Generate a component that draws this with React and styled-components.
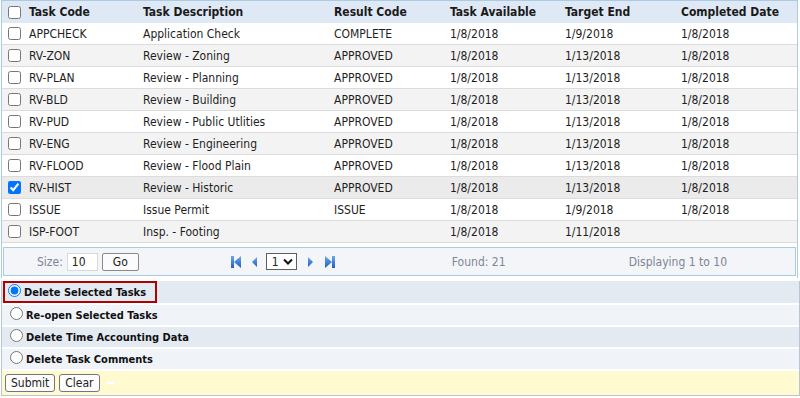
import React from "react"
import styled, { createGlobalStyle } from "styled-components"

const GlobalStyle = createGlobalStyle`
  body {
    margin: 0;
    background: #ffffff;
    font-family: "DejaVu Sans Condensed", "DejaVu Sans", Verdana, sans-serif;
    color: #1e1e1e;
  }
`

const Page = styled.div`
  width: 800px;
  height: 398px;
  overflow: hidden;
`

const Panel = styled.div`
  box-sizing: border-box;
  width: 797px;
  margin-left: 1px;
  border: 1px solid #a9cbe4;
  border-bottom: none;
  padding-bottom: 1px;
`

const COLS = "24px 114px 191px 116px 115px 116px 1fr"

const HeaderRow = styled.div`
  display: grid;
  grid-template-columns: ${COLS};
  height: 22px;
  align-items: center;
  background: #dfe8f5;
  font-size: 12px;
  font-weight: bold;
  color: #1a1a1a;
`

const Row = styled.div`
  display: grid;
  grid-template-columns: ${COLS};
  height: 21px;
  align-items: center;
  border-bottom: 1px solid #dcdcdc;
  background: ${({ $bg }) => $bg};
  font-size: 12px;
`

const Cell = styled.div`
  padding-left: 3px;
  white-space: nowrap;
`

const BoxCell = styled.div`
  display: flex;
  align-items: center;
  padding-left: 6px;
`

const Check = styled.input`
  width: 13px;
  height: 13px;
  margin: 0;
`

const Pager = styled.div`
  display: flex;
  align-items: center;
  height: 27px;
  margin: 4px 1px 1px 1px;
  border: 1px solid #a9cbe4;
  background: #f3f5f8;
  font-size: 12px;
  color: #7d8597;
`

const SizeLabel = styled.span`
  margin-left: 33px;
`

const SizeInput = styled.div`
  box-sizing: border-box;
  width: 31px;
  height: 18px;
  margin-left: 4px;
  padding: 1px 4px;
  border: 1px solid #d9d9d9;
  background: #fff;
  color: #222;
  font-size: 12px;
`

const PagerButton = styled.div`
  box-sizing: border-box;
  width: 37px;
  height: 18px;
  margin-left: 4px;
  border: 1px solid #8a8a8a;
  border-radius: 2px;
  background: #fbfbfb;
  color: #222;
  display: flex;
  align-items: center;
  justify-content: center;
`

const Nav = styled.div`
  display: flex;
  align-items: center;
  margin-left: 92px;
`

const NavIcon = styled.svg`
  display: block;
  margin-right: ${({ $gap }) => $gap}px;
`

const PageSelect = styled.div`
  box-sizing: border-box;
  width: 31px;
  height: 17px;
  border: 1px solid #5e5e5e;
  background: #fff;
  color: #222;
  display: flex;
  align-items: center;
  justify-content: space-between;
  padding: 0 3px 0 5px;
  margin-right: 10px;
`

const Found = styled.span`
  margin-left: 117px;
`

const Showing = styled.span`
  margin-left: auto;
  margin-right: 68px;
`

const Options = styled.div`
  box-sizing: border-box;
  width: 799px;
  margin: 3px 0 0 1px;
  border: 1px solid #b7c6d6;
  border-top: none;
  display: flex;
  flex-direction: column;
  gap: 2px;
`

const OptionRow = styled.label`
  display: flex;
  align-items: center;
  height: ${({ $first }) => ($first ? "22px" : "20px")};
  background: ${({ $light }) => ($light ? "#f0f4f8" : "#e4eaf2")};
  font-size: 11px;
  font-weight: bold;
  color: #111;
  padding-left: ${({ $first }) => ($first ? "1px" : "5px")};
`

const Selected = styled.span`
  display: flex;
  align-items: center;
  box-sizing: border-box;
  height: 22px;
  padding-right: 9px;
  border: 2px solid #b00000;
`

const Radio = styled.input`
  width: 13px;
  height: 13px;
  margin: 0 3px 0 3px;
  position: relative;
  top: -2px;
`

const Footer = styled.div`
  display: flex;
  align-items: center;
  gap: 4px;
  height: 24px;
  padding-left: 3px;
  background: #fffacf;
`

const Button = styled.button`
  height: 18px;
  padding: 0 5px;
  border: 1px solid #767676;
  border-radius: 3px;
  background: #fdfdfd;
  font-family: inherit;
  font-size: 12px;
  color: #222;
`

const Dash = styled.span`
  width: 9px;
  height: 2px;
  margin-left: 2px;
  background: #ffffff;
`

const tasks = [
  ["APPCHECK", "Application Check", "COMPLETE", "1/8/2018", "1/9/2018", "1/8/2018"],
  ["RV-ZON", "Review - Zoning", "APPROVED", "1/8/2018", "1/13/2018", "1/8/2018"],
  ["RV-PLAN", "Review - Planning", "APPROVED", "1/8/2018", "1/13/2018", "1/8/2018"],
  ["RV-BLD", "Review - Building", "APPROVED", "1/8/2018", "1/13/2018", "1/8/2018"],
  ["RV-PUD", "Review - Public Utlities", "APPROVED", "1/8/2018", "1/13/2018", "1/8/2018"],
  ["RV-ENG", "Review - Engineering", "APPROVED", "1/8/2018", "1/13/2018", "1/8/2018"],
  ["RV-FLOOD", "Review - Flood Plain", "APPROVED", "1/8/2018", "1/13/2018", "1/8/2018"],
  ["RV-HIST", "Review - Historic", "APPROVED", "1/8/2018", "1/13/2018", "1/8/2018"],
  ["ISSUE", "Issue Permit", "ISSUE", "1/8/2018", "1/9/2018", "1/8/2018"],
  ["ISP-FOOT", "Insp. - Footing", "", "1/8/2018", "1/11/2018", ""],
]

const Blue = () => (
  <defs>
    <linearGradient id="nb" x1="0" y1="0" x2="0" y2="1">
      <stop offset="0" stopColor="#6fa6ec" />
      <stop offset="1" stopColor="#1f5fc4" />
    </linearGradient>
  </defs>
)

const FirstIcon = () => (
  <NavIcon width="11" height="14" viewBox="0 0 11 14" $gap={9}>
    <Blue />
    <rect x="0" y="1" width="3" height="12" fill="url(#nb)" />
    <path d="M10 1 L3 7 L10 13 Z" fill="url(#nb)" />
  </NavIcon>
)

const PrevIcon = () => (
  <NavIcon width="7" height="14" viewBox="0 0 7 14" $gap={8}>
    <path d="M6 2 L1 7 L6 12 Z" fill="url(#nb)" />
  </NavIcon>
)

const NextIcon = () => (
  <NavIcon width="7" height="14" viewBox="0 0 7 14" $gap={11}>
    <path d="M1 2 L6 7 L1 12 Z" fill="url(#nb)" />
  </NavIcon>
)

const LastIcon = () => (
  <NavIcon width="10" height="14" viewBox="0 0 10 14" $gap={0}>
    <path d="M0 1 L7 7 L0 13 Z" fill="url(#nb)" />
    <rect x="7" y="1" width="3" height="12" fill="url(#nb)" />
  </NavIcon>
)

const rowBg = (i) => {
  if (i === 7) return "#ebebeb"
  return i % 2 === 1 ? "#f3f3f3" : "#ffffff"
}

export default function App() {
  return (
    <Page>
      <GlobalStyle />
      <Panel>
        <HeaderRow>
          <BoxCell>
            <Check type="checkbox" readOnly />
          </BoxCell>
          <Cell>Task Code</Cell>
          <Cell>Task Description</Cell>
          <Cell>Result Code</Cell>
          <Cell>Task Available</Cell>
          <Cell>Target End</Cell>
          <Cell>Completed Date</Cell>
        </HeaderRow>
        {tasks.map((t, i) => (
          <Row key={t[0]} $bg={rowBg(i)}>
            <BoxCell>
              <Check type="checkbox" checked={i === 7} readOnly />
            </BoxCell>
            {t.map((v, j) => (
              <Cell key={j}>{v}</Cell>
            ))}
          </Row>
        ))}
        <Pager>
          <SizeLabel>Size:</SizeLabel>
          <SizeInput>10</SizeInput>
          <PagerButton>Go</PagerButton>
          <Nav>
            <FirstIcon />
            <PrevIcon />
            <PageSelect>
              <span>1</span>
              <svg width="10" height="7" viewBox="0 0 10 7">
                <path d="M1 1.5 L5 5.5 L9 1.5" fill="none" stroke="#111" strokeWidth="2" />
              </svg>
            </PageSelect>
            <NextIcon />
            <LastIcon />
          </Nav>
          <Found>Found: 21</Found>
          <Showing>Displaying 1 to 10</Showing>
        </Pager>
      </Panel>
      <Options>
        <OptionRow $first>
          <Selected>
            <Radio type="radio" name="act" defaultChecked />
            Delete Selected Tasks
          </Selected>
        </OptionRow>
        <OptionRow $light>
          <Radio type="radio" name="act" />
          Re-open Selected Tasks
        </OptionRow>
        <OptionRow>
          <Radio type="radio" name="act" />
          Delete Time Accounting Data
        </OptionRow>
        <OptionRow $light>
          <Radio type="radio" name="act" />
          Delete Task Comments
        </OptionRow>
        <Footer>
          <Button>Submit</Button>
          <Button>Clear</Button>
          <Dash />
        </Footer>
      </Options>
    </Page>
  )
}
